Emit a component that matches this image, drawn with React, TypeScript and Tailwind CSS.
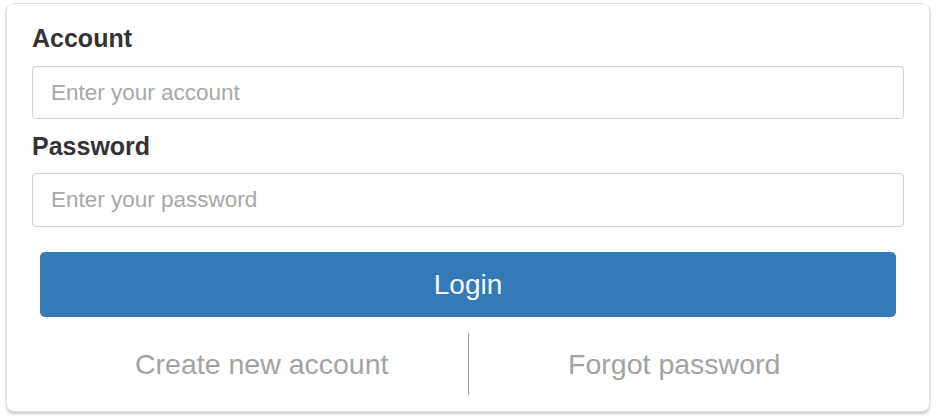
export default function App() {
  return (
    <main className="min-h-screen bg-white pt-[3px] pl-[6px] font-['Liberation_Sans',Arial,sans-serif]">
      <div className="w-[924px] h-[409px] rounded-[8px] border border-[#e2e2e2] bg-white px-[25px] pt-[16px] shadow-[0_2px_3px_rgba(0,0,0,0.22)]">
        <label className="block text-[25px] leading-[36px] font-bold text-[#333]">Account</label>
        <input
          type="text"
          placeholder="Enter your account"
          className="mt-[10px] block h-[53px] w-full rounded-[4px] border border-[#d0d0d0] px-[18px] text-[22.5px] text-[#555] outline-none placeholder:text-[#a8a8a8]"
        />

        <label className="mt-[9px] block text-[25px] leading-[36px] font-bold text-[#333]">Password</label>
        <input
          type="password"
          placeholder="Enter your password"
          className="mt-[9px] block h-[54px] w-full rounded-[4px] border border-[#d0d0d0] px-[18px] text-[22.5px] text-[#555] outline-none placeholder:text-[#a8a8a8]"
        />

        <button className="mx-[8px] mt-[25px] flex h-[65px] w-[856px] items-center justify-center rounded-[5px] bg-[#337ab7] text-[28px] text-[#f4f8fc]">
          Login
        </button>

        <div className="mx-[24px] mt-[16px] grid h-[62px] grid-cols-[1fr_1px_1fr] items-center text-center text-[28.5px] text-[#a3a3a3]">
          <a href="#" className="block">Create new account</a>
          <div className="h-full w-px bg-[#9c9c9c]" />
          <a href="#" className="block">Forgot password</a>
        </div>
      </div>
    </main>
  );
}
